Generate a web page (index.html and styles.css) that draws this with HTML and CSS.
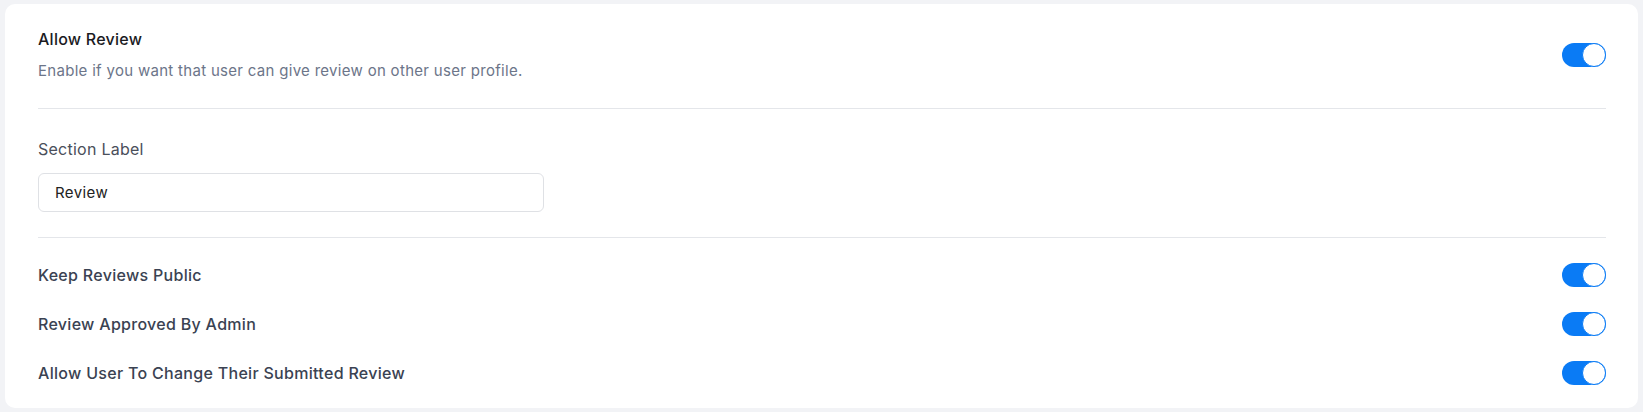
FILE: index.html
```html
<!DOCTYPE html>
<html lang="en">
<head>
    <meta charset="UTF-8">
    <meta name="viewport" content="width=device-width, initial-scale=1.0">
    <title>Review Settings</title>
    <link rel="stylesheet" href="styles.css">
</head>
<body>
    <div class="card">
        <div class="setting-main">
            <div class="setting-text">
                <h3 class="setting-title">Allow Review</h3>
                <p class="setting-desc">Enable if you want that user can give review on other user profile.</p>
            </div>
            <label class="switch">
                <input type="checkbox" checked>
                <span class="slider"></span>
            </label>
        </div>
        <div class="field">
            <label for="section_label" class="field-label">Section Label</label>
            <input type="text" id="section_label" class="field-input" value="Review">
        </div>
        <div class="toggle-list">
            <div class="toggle-row">
                <span class="toggle-name">Keep Reviews Public</span>
                <label class="switch">
                    <input type="checkbox" checked>
                    <span class="slider"></span>
                </label>
            </div>
            <div class="toggle-row">
                <span class="toggle-name">Review Approved By Admin</span>
                <label class="switch">
                    <input type="checkbox" checked>
                    <span class="slider"></span>
                </label>
            </div>
            <div class="toggle-row">
                <span class="toggle-name">Allow User To Change Their Submitted Review</span>
                <label class="switch">
                    <input type="checkbox" checked>
                    <span class="slider"></span>
                </label>
            </div>
        </div>
    </div>
</body>
</html>
```

FILE: styles.css
```css
body {
    font-family: Inter, "Open Sans", sans-serif;
    margin: 0;
    padding: 4px 5px;
    background-color: #f2f3f6;
}
.card {
    background-color: #fff;
    border-radius: 10px;
    padding: 0 32px 11px 33px;
}
.setting-main {
    display: flex;
    justify-content: space-between;
    align-items: center;
    padding: 24px 0 26px;
    border-bottom: 1px solid #e4e6ea;
}
.setting-title {
    margin: 0;
    font-size: 16px;
    line-height: 22px;
    font-weight: 500;
    letter-spacing: 0.25px;
    color: #1b1b1f;
}
.setting-desc {
    margin: 10px 0 0;
    font-size: 15px;
    line-height: 22px;
    letter-spacing: 0.3px;
    color: #6c7589;
}
.field {
    padding: 29px 0 25px;
    border-bottom: 1px solid #e4e6ea;
}
.field-label {
    display: block;
    font-size: 16px;
    line-height: 22px;
    letter-spacing: 0.25px;
    color: #4a4f5a;
    margin-bottom: 13px;
}
.field-input {
    box-sizing: border-box;
    width: 506px;
    height: 39px;
    padding: 0 16px;
    font-family: inherit;
    font-size: 15px;
    letter-spacing: 0.4px;
    color: #222;
    border: 1px solid #dfe1e5;
    border-radius: 6px;
    outline: none;
}
.toggle-list {
    padding-top: 12px;
}
.toggle-row {
    display: flex;
    justify-content: space-between;
    align-items: center;
    height: 49px;
}
.toggle-name {
    font-size: 16px;
    font-weight: 500;
    letter-spacing: 0.3px;
    color: #3a4252;
}
.switch {
    position: relative;
    display: inline-block;
    width: 44px;
    height: 24px;
    flex-shrink: 0;
}
.switch input {
    opacity: 0;
    width: 0;
    height: 0;
}
.slider {
    position: absolute;
    inset: 0;
    background-color: #0a7bf5;
    border-radius: 12px;
    cursor: pointer;
}
.slider::before {
    content: "";
    position: absolute;
    top: 0;
    right: 0;
    width: 22px;
    height: 22px;
    border: 1px solid #0a7bf5;
    border-radius: 50%;
    background-color: #fff;
}
```
